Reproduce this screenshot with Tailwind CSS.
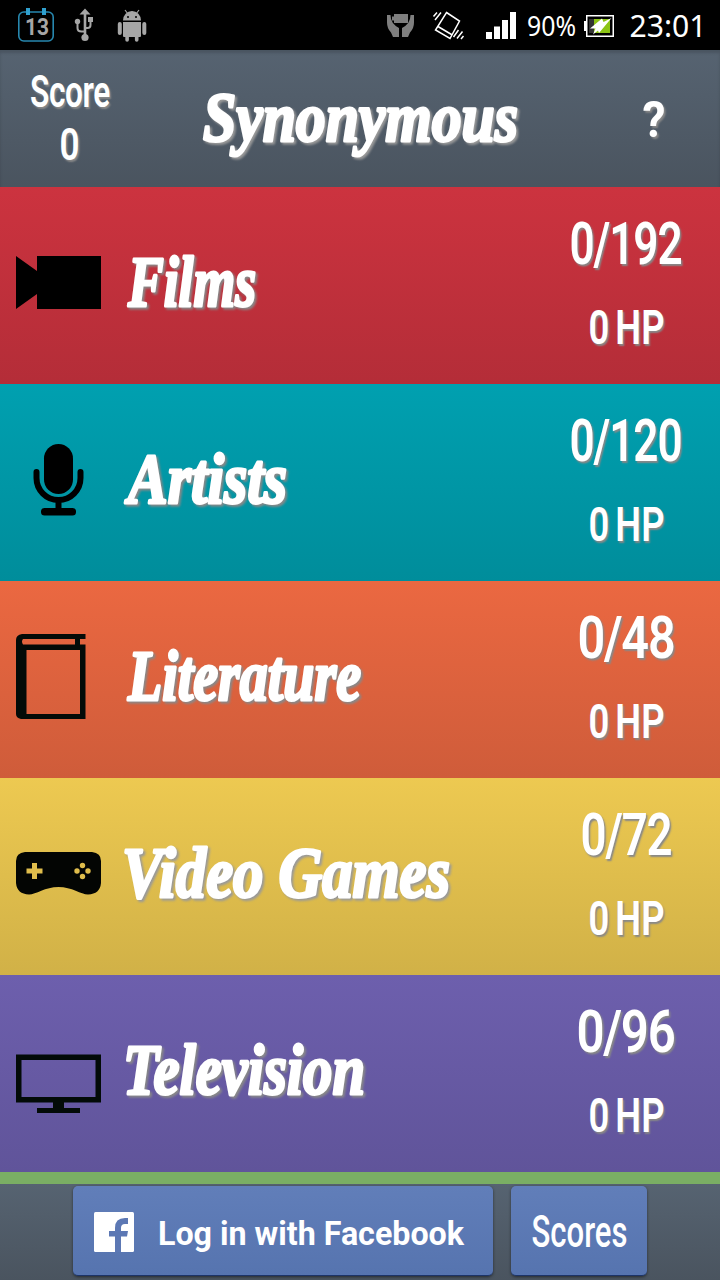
<!DOCTYPE html>
<html lang="en">
<head>
    <meta charset="UTF-8">
    <meta name="viewport" content="width=device-width, initial-scale=1.0">
    <title>Synonymous</title>
    <script src="https://cdn.jsdelivr.net/npm/@tailwindcss/browser@4"></script>
</head>
<body class="w-[720px] h-[1280px] overflow-hidden bg-black flex flex-col text-white font-['Roboto',sans-serif]">

    <!-- Status bar -->
    <div class="h-[50px] shrink-0 bg-black flex items-center justify-between">
        <svg class="w-[160px] h-[50px]" viewBox="0 0 160 50">
            <rect x="18.8" y="12" width="34.4" height="29" rx="5" fill="none" stroke="#2787ae" stroke-width="1.6"/>
            <path d="M26 8h4v7h-4zM42 8h4v7h-4z" fill="#2f9fce"/>
            <text x="25" y="34.5" font-size="24" font-weight="700" textLength="24" lengthAdjust="spacingAndGlyphs" fill="#a6a6a6">13</text>
            <g fill="none" stroke="#a6a6a6" stroke-width="2">
                <path d="M85 12v25" stroke-width="2.6"/>
                <path d="M77.500 22v6q0 3.500 4 3.500h3M90.500 20v5q0 3-3 3h-2"/>
            </g>
            <path d="M85 8.500l5.500 6h-11zM88 17h5v5h-5z" fill="#a6a6a6"/>
            <circle cx="77.500" cy="21.500" r="2.700" fill="#a6a6a6"/>
            <circle cx="85" cy="37.500" r="3.600" fill="#a6a6a6"/>
            <g fill="#a6a6a6">
                <path d="M123 20.500a9 9.500 0 0 1 18 0zM123 22h18v14q0 1-1 1h-1.500v3a1.800 1.800 0 0 1-3.600 0v-3h-6v3a1.800 1.800 0 0 1-3.600 0v-3H124q-1 0-1-1z"/>
                <rect x="117.800" y="22" width="4" height="13" rx="2"/>
                <rect x="142.300" y="22" width="4" height="13" rx="2"/>
                <path d="M125 10l3 4M139 10l-3 4" stroke="#a6a6a6" stroke-width="1.200"/>
            </g>
            <circle cx="128" cy="17" r="1" fill="#000"/>
            <circle cx="136" cy="17" r="1" fill="#000"/>
        </svg>
        <svg class="w-[340px] h-[50px]" viewBox="380 0 340 50">
            <path d="M387 15h3.500q0 8.500 8.500 13v9h-6l-2-4.500q-4-4-4-10zM414 15h-3.500q0 8.500-8.500 13v9h6l2-4.500q4-4 4-10zM394 14h14v9h-14v-2.500h-2v-4h2z" fill="#7f7f7f"/>
            <g fill="none" stroke="#fff" stroke-width="1.500">
                <path d="M446.500 12.500l13 8.500-9.500 17.500-14.500-8.500zM438 26.500l13.500 8"/>
                <path d="M433.500 16.500l3.500-4M435 20l6-7.500M457 38.500l5.500-7M461 39l2.500-3M453.500 37l5-7"/>
            </g>
            <path d="M486 32h6v7h-6zM494 26.500h6V39h-6zM502 20h6v19h-6zM510 12h6v27h-6z" fill="#fff"/>
            <text x="527" y="36" font-family="Noto Sans, sans-serif" font-size="27.500" textLength="49" lengthAdjust="spacingAndGlyphs" fill="#fff">90%</text>
            <path d="M586.750 15.750h26.500v20.500h-26.500z" fill="none" stroke="#fff" stroke-width="1.500"/>
            <path d="M584 21h3v10h-3z" fill="#fff"/>
            <path d="M589 19h5v14h-5z" fill="#333"/>
            <path d="M594 19h16v14h-16z" fill="#8cc414"/>
            <path d="M602 18.500l-12 10h5.500l-2.500 6 5-4 1 2.500L611.500 18l-8 4z" fill="#fff"/>
            <text x="629.500" y="37" font-family="Noto Sans, sans-serif" font-size="31.500" textLength="77" lengthAdjust="spacingAndGlyphs" fill="#fff">23:01</text>
        </svg>
    </div>

    <!-- Header -->
    <header class="h-[137px] shrink-0 bg-linear-to-b from-[#566371] to-[#4a545f] shadow-[inset_0_3px_3px_rgba(0,0,0,0.15)] flex">
        <svg class="w-[140px] h-[137px] shrink-0 overflow-visible [text-shadow:2px_2px_2px_#888]" viewBox="0 0 140 137" fill="#fff" font-weight="600">
            <text x="30" y="57" font-size="44" letter-spacing="-0.500" textLength="80" lengthAdjust="spacingAndGlyphs">Score</text>
            <text x="59.500" y="109.500" font-size="44" textLength="20" lengthAdjust="spacingAndGlyphs">0</text>
        </svg>
        <h1 class="ml-[57px]">
            <svg class="w-[330px] h-[137px] overflow-visible drop-shadow-[2px_2px_1px_#999]" viewBox="197 0 330 137" fill="#fff" stroke="#fff" stroke-width="3" stroke-linejoin="round">
                <text x="203" y="91" font-family="Liberation Serif, serif" font-size="70" font-weight="700" font-style="italic" textLength="315" lengthAdjust="spacingAndGlyphs">Synonymous</text>
            </svg>
        </h1>
        <svg class="w-[110px] h-[137px] ml-[83px] shrink-0 [text-shadow:2px_2px_2px_#888]" viewBox="610 0 110 137" fill="#fff">
            <text x="642.500" y="86.500" font-size="50" font-weight="700" textLength="23" lengthAdjust="spacingAndGlyphs">?</text>
        </svg>
    </header>

    <!-- Categories -->
    <main class="shrink-0 flex flex-col">
        <section class="h-[197px] pl-4 flex bg-linear-to-b from-[#cc333f] to-[#b42d38]">
            <svg class="w-[85px] h-[85px] mt-[53px]" viewBox="0 0 85 85">
                <path d="M0 16l21 15V16h64v53H21V54L0 69z"/>
            </svg>
            <svg class="w-[420px] h-[197px] ml-6 overflow-visible drop-shadow-[2px_2px_1px_#888]" viewBox="0 0 420 197" fill="#fff" stroke="#fff" stroke-width="3" stroke-linejoin="round">
                <text x="3" y="118.500" font-family="Liberation Serif, serif" font-size="71" font-weight="700" font-style="italic" textLength="128" lengthAdjust="spacingAndGlyphs">Films</text>
            </svg>
            <svg class="w-[175px] h-[197px] overflow-visible [text-shadow:2px_2px_2px_#888]" viewBox="-20 0 175 197" fill="#fff" font-weight="600">
                <text x="4.500" y="77" font-size="60" letter-spacing="-1.500" textLength="112" lengthAdjust="spacingAndGlyphs">0/192</text>
                <text x="23.500" y="157" font-size="49" word-spacing="-4" textLength="76" lengthAdjust="spacingAndGlyphs">0 HP</text>
            </svg>
        </section>

        <section class="h-[197px] pl-4 flex bg-linear-to-b from-[#00a0b0] to-[#008d9b]">
            <svg class="w-[85px] h-[85px] mt-[53px]" viewBox="0 0 85 85">
                <rect x="28" y="7" width="29" height="50" rx="14.500"/>
                <path d="M20.500 35v6a22 22 0 0 0 44 0v-6M42.500 63v10" fill="none" stroke="#000" stroke-width="6" stroke-linecap="round"/>
                <rect x="25" y="71" width="35" height="7.500" rx="3.500"/>
            </svg>
            <svg class="w-[420px] h-[197px] ml-6 overflow-visible drop-shadow-[2px_2px_1px_#888]" viewBox="0 0 420 197" fill="#fff" stroke="#fff" stroke-width="3" stroke-linejoin="round">
                <text x="3" y="118.500" font-family="Liberation Serif, serif" font-size="71" font-weight="700" font-style="italic" textLength="159" lengthAdjust="spacingAndGlyphs">Artists</text>
            </svg>
            <svg class="w-[175px] h-[197px] overflow-visible [text-shadow:2px_2px_2px_#888]" viewBox="-20 0 175 197" fill="#fff" font-weight="600">
                <text x="4.500" y="77" font-size="60" letter-spacing="-1.500" textLength="112" lengthAdjust="spacingAndGlyphs">0/120</text>
                <text x="23.500" y="157" font-size="49" word-spacing="-4" textLength="76" lengthAdjust="spacingAndGlyphs">0 HP</text>
            </svg>
        </section>

        <section class="h-[197px] pl-4 flex bg-linear-to-b from-[#eb6841] to-[#cf5c3a]">
            <svg class="w-[85px] h-[85px] mt-[53px]" viewBox="0 0 85 85">
                <path fill="#030b08" fill-rule="evenodd" d="M6 0H69.500V5H64v5.500h5.500V85H5q-5-1-5-5V6Q0 1 6 0zM7 5q-2 2.500 0 5.500H59V5zM10.500 16v64H64V16z"/>
            </svg>
            <svg class="w-[420px] h-[197px] ml-6 overflow-visible drop-shadow-[2px_2px_1px_#888]" viewBox="0 0 420 197" fill="#fff" stroke="#fff" stroke-width="3" stroke-linejoin="round">
                <text x="3" y="118.500" font-family="Liberation Serif, serif" font-size="71" font-weight="700" font-style="italic" textLength="233" lengthAdjust="spacingAndGlyphs">Literature</text>
            </svg>
            <svg class="w-[175px] h-[197px] overflow-visible [text-shadow:2px_2px_2px_#888]" viewBox="-20 0 175 197" fill="#fff" font-weight="600">
                <text x="12.500" y="77" font-size="60" letter-spacing="-1.500" textLength="97" lengthAdjust="spacingAndGlyphs">0/48</text>
                <text x="23.500" y="157" font-size="49" word-spacing="-4" textLength="76" lengthAdjust="spacingAndGlyphs">0 HP</text>
            </svg>
        </section>

        <section class="h-[197px] pl-4 flex bg-linear-to-b from-[#edc951] to-[#d1b147]">
            <svg class="w-[85px] h-[85px] mt-[53px]" viewBox="0 0 85 85">
                <path fill="#030503" d="M9 21h67q9 1 9 9v22q-1 11-13 11.500c-7 0-16-7.500-29.500-7.500S20 63.500 13 63.500Q1 63 0 52V30q0-8 9-9z"/>
                <path fill="#dfbd4c" d="M16 32h5v5.500h5.500v5H21V48h-5v-5.500h-5.500v-5H16z"/>
                <g fill="#dfbd4c">
                    <circle cx="66.500" cy="34.500" r="2.700"/>
                    <circle cx="61" cy="40" r="2.700"/>
                    <circle cx="72" cy="40" r="2.700"/>
                    <circle cx="66.500" cy="45.500" r="2.700"/>
                </g>
            </svg>
            <svg class="w-[420px] h-[197px] ml-6 overflow-visible drop-shadow-[2px_2px_1px_#999]" viewBox="0 0 420 197" fill="#fff" stroke="#fff" stroke-width="3" stroke-linejoin="round">
                <text x="-3" y="118.500" font-family="Liberation Serif, serif" font-size="71" font-weight="700" font-style="italic" textLength="328" lengthAdjust="spacingAndGlyphs">Video Games</text>
            </svg>
            <svg class="w-[175px] h-[197px] overflow-visible [text-shadow:2px_2px_2px_#888]" viewBox="-20 0 175 197" fill="#fff" font-weight="600">
                <text x="15.500" y="77" font-size="60" letter-spacing="-1.500" textLength="91" lengthAdjust="spacingAndGlyphs">0/72</text>
                <text x="23.500" y="157" font-size="49" word-spacing="-4" textLength="76" lengthAdjust="spacingAndGlyphs">0 HP</text>
            </svg>
        </section>

        <section class="h-[197px] pl-4 flex bg-linear-to-b from-[#6d5fad] to-[#60549a]">
            <svg class="w-[85px] h-[85px] mt-[53px]" viewBox="0 0 85 85">
                <path fill="#030b08" fill-rule="evenodd" d="M0 26.500h85v48H48v5.500h16v5H21v-5h16v-5.500H0zM5.500 32v37h74V32z"/>
            </svg>
            <svg class="w-[420px] h-[197px] ml-6 overflow-visible drop-shadow-[2px_2px_1px_#888]" viewBox="0 0 420 197" fill="#fff" stroke="#fff" stroke-width="3" stroke-linejoin="round">
                <text x="-2" y="118.500" font-family="Liberation Serif, serif" font-size="71" font-weight="700" font-style="italic" textLength="242" lengthAdjust="spacingAndGlyphs">Television</text>
            </svg>
            <svg class="w-[175px] h-[197px] overflow-visible [text-shadow:2px_2px_2px_#888]" viewBox="-20 0 175 197" fill="#fff" font-weight="600">
                <text x="11.500" y="77" font-size="60" letter-spacing="-1.500" textLength="98" lengthAdjust="spacingAndGlyphs">0/96</text>
                <text x="23.500" y="157" font-size="49" word-spacing="-4" textLength="76" lengthAdjust="spacingAndGlyphs">0 HP</text>
            </svg>
        </section>

        <section class="h-3 bg-[#7aae64]"></section>
    </main>

    <!-- Footer -->
    <footer class="h-24 shrink-0 pt-0.5 flex justify-center gap-[18px] bg-linear-to-b from-[#566371] to-[#4a545f]">
        <button class="w-[420px] h-[90px] pl-[21px] flex items-center rounded-[5px] bg-linear-to-b from-[#617eb9] to-[#5674af] border-b border-[#1c3468] shadow-[0_1px_3px_rgba(0,0,0,0.5)]">
            <svg class="w-10 h-10 mt-[3px]" viewBox="0 0 40 40">
                <rect width="40" height="40" rx="1.500" fill="#fff"/>
                <path d="M21 40V24.500h-6V19h6v-3q0-10 10-10h3v6h-3q-4 0-4 4v3h7l-1 5.500h-6V40z" fill="#5c78b4"/>
            </svg>
            <svg class="w-[310px] h-[50px] ml-6 overflow-visible" viewBox="0 0 310 50" fill="#fff">
                <text x="0" y="38.500" font-size="33" font-weight="700" textLength="306" lengthAdjust="spacingAndGlyphs">Log in with Facebook</text>
            </svg>
        </button>
        <button class="w-[136px] h-[90px] rounded-[5px] bg-linear-to-b from-[#617eb9] to-[#5674af] border-b border-[#1c3468] shadow-[0_1px_3px_rgba(0,0,0,0.5)]">
            <svg class="w-[136px] h-[88px] overflow-visible" viewBox="0 0 136 88" fill="#fff">
                <text x="20.500" y="59.500" font-size="44" font-weight="500" textLength="96" lengthAdjust="spacingAndGlyphs">Scores</text>
            </svg>
        </button>
    </footer>

</body>
</html>
